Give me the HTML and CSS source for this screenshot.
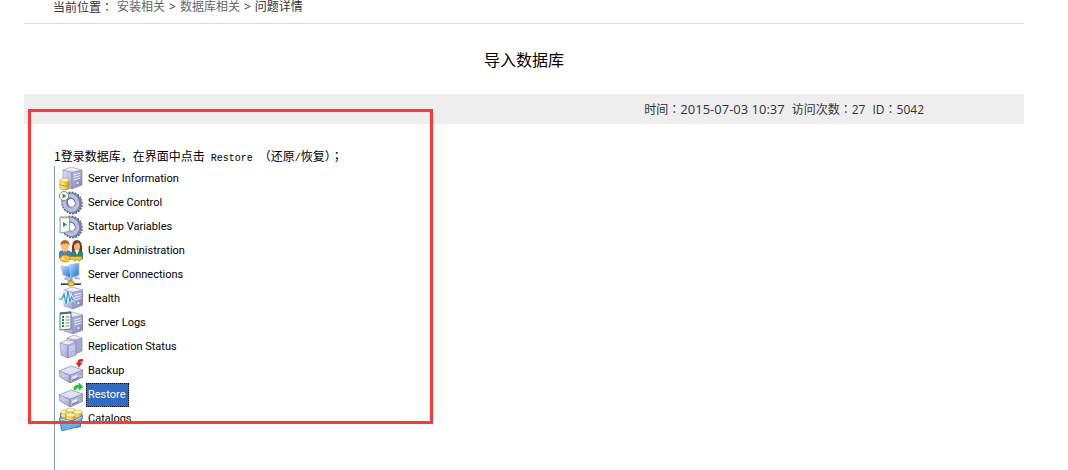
FILE: index.html
```html
<!DOCTYPE html>
<html lang="zh-CN">
<head>
    <meta charset="UTF-8">
    <meta name="viewport" content="width=device-width, initial-scale=1.0">
    <title>导入数据库</title>
    <link rel="stylesheet" href="styles.css">
</head>
<body>
    <!-- shared icon parts -->
    <svg class="icon-defs" aria-hidden="true">
        <defs>
            <linearGradient id="front" x1="0" y1="0" x2="1" y2="1">
                <stop offset="0" stop-color="#dcdef5"/>
                <stop offset="1" stop-color="#a2a5d2"/>
            </linearGradient>
            <linearGradient id="side" x1="0" y1="0" x2="1" y2="1">
                <stop offset="0" stop-color="#bcbfe2"/>
                <stop offset="1" stop-color="#7b7fb3"/>
            </linearGradient>
            <linearGradient id="gold" x1="0" y1="0" x2="1" y2="0">
                <stop offset="0" stop-color="#fff0a0"/>
                <stop offset="0.5" stop-color="#f8d558"/>
                <stop offset="1" stop-color="#cf9b2a"/>
            </linearGradient>
            <linearGradient id="screen" x1="0" y1="0" x2="1" y2="1">
                <stop offset="0" stop-color="#b5e3ff"/>
                <stop offset="1" stop-color="#1c69ce"/>
            </linearGradient>
            <g id="server">
                <path d="M4 3 13 5V22L4 19Z" fill="url(#front)" stroke="#8f92be" stroke-width=".6"/>
                <path d="M13 5 23 3V18L13 22Z" fill="url(#side)" stroke="#8184b3" stroke-width=".6"/>
                <path d="M4 3 12 0 23 3 13 5Z" fill="#eceefd" stroke="#9295c0" stroke-width=".6"/>
                <path d="M14.500 8 21.500 6M14.500 10.500 21.500 8.500M14.500 13 21.500 11" stroke="#edeefc" stroke-width="1"/>
                <circle cx="18.500" cy="16" r="1" fill="#eceefc"/>
            </g>
            <g id="gear">
                <g transform="rotate(-25 13 12)">
                    <ellipse cx="13" cy="12" rx="9.500" ry="10.500" fill="none" stroke="#575f87" stroke-width="2.200" stroke-dasharray="1.900 1.100"/>
                    <ellipse cx="13" cy="12" rx="7" ry="8" fill="none" stroke="#7780a8" stroke-width="5"/>
                    <ellipse cx="12" cy="11.500" rx="6.500" ry="7.500" fill="none" stroke="#b9bfdd" stroke-width="3.500"/>
                    <ellipse cx="12.500" cy="11.500" rx="3.800" ry="4.500" fill="#fff" stroke="#5c648e" stroke-width="1"/>
                </g>
            </g>
            <g id="drive">
                <path d="M0 12 11 16V24L1 18Z" fill="url(#front)" stroke="#7f82af" stroke-width=".7"/>
                <path d="M11 16 24 11V18L11 24Z" fill="#b4b7da" stroke="#73779f" stroke-width=".8"/>
                <path d="M0 12 12 7 24 11 11 16Z" fill="#dfe1f6" stroke="#8588b5" stroke-width=".7"/>
                <path d="M13 18 18 16V18L13 20Z" fill="#eef0ff"/>
                <path d="M13 21.500 20 18.500" stroke="#6b6f98" stroke-width=".9"/>
                <circle cx="21.500" cy="15" r=".9" fill="#83b985"/>
            </g>
            <g id="coins">
                <path d="M0 2V10A4.500 2 0 0 0 9 10V2Z" fill="url(#gold)" stroke="#b98b2e" stroke-width=".7"/>
                <path d="M0 6A4.500 2 0 0 0 9 6" fill="none" stroke="#b8861f" stroke-width=".8"/>
                <ellipse cx="4.500" cy="2" rx="4.500" ry="2" fill="#fff5ba" stroke="#c99f42" stroke-width=".6"/>
            </g>
        </defs>
    </svg>

    <div class="container">
        <nav class="breadcrumb">
            <span>当前位置<span class="colon" lang="zh-TW">：</span></span>
            <a href="#">安装相关</a>
            <span>&gt;</span>
            <a href="#">数据库相关</a>
            <span>&gt;</span>
            <span>问题详情</span>
        </nav>
        <h1>导入数据库</h1>
        <div class="info-bar">
            <span>时间<span class="colon" lang="zh-TW">：</span><span class="date">2015-07-03 10:37</span></span>
            <span>访问次数<span class="colon" lang="zh-TW">：</span>27</span>
            <span>ID<span class="colon" lang="zh-TW">：</span>5042</span>
        </div>

        <div class="content">
            <p class="step">1登录数据库，在界面中点击<span class="mono"> Restore </span>（还原<span class="mono">/</span>恢复）<span class="colon" lang="zh-TW">；</span></p>
            <ul class="tree">
                <li>
                    <a href="#">
                        <svg class="icon" viewBox="0 0 24 24"><use href="#server"/><use href="#coins" x="1" y="11"/></svg>
                        <span>Server Information</span>
                    </a>
                </li>
                <li>
                    <a href="#">
                        <svg class="icon" viewBox="0 0 24 24">
                            <use href="#gear"/>
                            <circle cx="5" cy="5" r="4.500" fill="#fff" stroke="#71827c" stroke-width=".9"/>
                            <path d="M3.500 2.500 7.500 5 3.500 7.500Z" fill="#18a532"/>
                        </svg>
                        <span>Service Control</span>
                    </a>
                </li>
                <li>
                    <a href="#">
                        <svg class="icon" viewBox="0 0 24 24">
                            <use href="#gear"/>
                            <path d="M1 2H10.500V16.500L1 18Z" fill="#f2fbf7" stroke="#7793a3" stroke-width=".9"/>
                            <path d="M1 2.500H10.500" stroke="#c8ad65" stroke-width="1.500"/>
                            <path d="M4 7 8 9.500 4 12Z" fill="#18a532"/>
                        </svg>
                        <span>Startup Variables</span>
                    </a>
                </li>
                <li>
                    <a href="#">
                        <svg class="icon" viewBox="0 0 24 24">
                            <path d="M0 19V14Q0 11 6 11T12 14V19Z" fill="#3c86bc"/>
                            <path d="M12 20V14Q12 11 18 11T24 14V20Z" fill="#238a78"/>
                            <path d="M4 11 6 16 8 11M16 11 18 16 20 11" fill="#fff"/>
                            <path d="M6 12V17" stroke="#d34124" stroke-width="1.500"/>
                            <ellipse cx="6" cy="7" rx="4" ry="5" fill="#f5c07c"/>
                            <path d="M1.500 7Q1 1 6 1T10.500 7L9 4.500 3 5Z" fill="#b86b17"/>
                            <path d="M13 13Q12 1 18 1T23 13L20 11H16Z" fill="#74391c"/>
                            <ellipse cx="18" cy="7.500" rx="3" ry="4" fill="#f2b980"/>
                            <path d="M14.500 6Q17 6 19 3L21.500 6 20 2H16Z" fill="#84441f"/>
                            <path d="M8 17.500H23V20.500H21V22H19V20.500H17V22H15V20.500H8Z" fill="#fac62e" stroke="#b37a13" stroke-width=".6"/>
                            <ellipse cx="6" cy="19.500" rx="5" ry="3.500" fill="#fbc52c" stroke="#b37a13" stroke-width=".7"/>
                            <circle cx="3.500" cy="19.500" r="1" fill="#fff"/>
                        </svg>
                        <span>User Administration</span>
                    </a>
                </li>
                <li>
                    <a href="#">
                        <svg class="icon" viewBox="0 0 24 24">
                            <path d="M7 14 14 16 11 18 5 16ZM16 12V16H21Z" fill="#bdc6d6" stroke="#8591a7" stroke-width=".5"/>
                            <path d="M12 14V20" stroke="#98a2b1" stroke-width="2"/>
                            <path d="M2 3 12 4V15L4 12Z" fill="url(#screen)" stroke="#a4c1dd" stroke-width=".9"/>
                            <path d="M10 2 20 0V12L12 15Z" fill="url(#screen)" stroke="#a4c1dd" stroke-width=".9"/>
                            <path d="M2 21H22" stroke="#3d4045" stroke-width="2"/>
                            <path d="M2 20.500H22" stroke="#a9adb4" stroke-width=".6"/>
                            <rect x="9" y="18" width="6" height="5" rx="1" fill="#f0c540" stroke="#987421" stroke-width=".7"/>
                        </svg>
                        <span>Server Connections</span>
                    </a>
                </li>
                <li>
                    <a href="#">
                        <svg class="icon" viewBox="0 0 24 24">
                            <use href="#server" x="1"/>
                            <path d="M0 12H3L5 7 7 17 9 4 11 15 12.500 10 14 13H16" fill="none" stroke="#e3f5ff" stroke-width="2.800"/>
                            <path d="M0 12H3L5 7 7 17 9 4 11 15 12.500 10 14 13H16" fill="none" stroke="#2f9ad8" stroke-width="1.200"/>
                        </svg>
                        <span>Health</span>
                    </a>
                </li>
                <li>
                    <a href="#">
                        <svg class="icon" viewBox="0 0 24 24">
                            <use href="#server" x="1" y="1"/>
                            <path d="M1 2 12 1V18L1 19Z" fill="#f5fbf7" stroke="#526b78" stroke-width=".9"/>
                            <path d="M1 2.500 12 1.500" stroke="#526b78" stroke-width="1.800"/>
                            <path d="M3 6H5M3 9H5M3 12H5M3 15H5" stroke="#18944e" stroke-width="1.800"/>
                            <path d="M6.500 6H10.500M6.500 9H10.500M6.500 12H10.500M6.500 15H10.500" stroke="#798a94" stroke-width="1"/>
                        </svg>
                        <span>Server Logs</span>
                    </a>
                </li>
                <li>
                    <a href="#">
                        <svg class="icon" viewBox="0 0 24 24">
                            <path d="M8 3 16 5V19L8 17Z" fill="url(#front)" stroke="#8588b6" stroke-width=".6"/>
                            <path d="M16 5 23 3V16L16 19Z" fill="#a5a9d2" stroke="#7175a8" stroke-width=".6"/>
                            <path d="M8 3 15 0 23 3 16 5Z" fill="#eceefd" stroke="#9295c0" stroke-width=".6"/>
                            <path d="M1 8 9 10V23L2 20Z" fill="url(#front)" stroke="#8588b6" stroke-width=".6"/>
                            <path d="M9 10 17 7V20L9 23Z" fill="#b9bce0" stroke="#7175a8" stroke-width=".6"/>
                            <path d="M1 8 8 5 17 7 9 10Z" fill="#eceefd" stroke="#9295c0" stroke-width=".6"/>
                            <path d="M10.500 13 15.500 11M10.500 15.500 15.500 13.500" stroke="#dfe1f5" stroke-width=".9"/>
                        </svg>
                        <span>Replication Status</span>
                    </a>
                </li>
                <li>
                    <a href="#">
                        <svg class="icon" viewBox="0 0 24 24">
                            <use href="#drive"/>
                            <path d="M24 0Q18 0 19 4H17L20 8 23 4H21Q21 2 24 2Z" fill="#ef1a20" stroke="#ef1a20" stroke-width=".6"/>
                        </svg>
                        <span>Backup</span>
                    </a>
                </li>
                <li>
                    <a href="#" class="selected">
                        <svg class="icon" viewBox="0 0 24 24">
                            <use href="#drive"/>
                            <path d="M15 7Q14 2 20 2V0L24 4 20 7V5Q17 4 17 7Z" fill="#20c52d" stroke="#20c52d" stroke-width=".5"/>
                        </svg>
                        <span>Restore</span>
                    </a>
                </li>
                <li>
                    <a href="#">
                        <svg class="icon" viewBox="0 0 24 24">
                            <path d="M1 6 8 4 22 8V20L2 23Z" fill="#2b79c9"/>
                            <use href="#coins" x="2" y="3"/>
                            <use href="#coins" x="7" y="1"/>
                            <use href="#coins" x="14" y="3"/>
                            <use href="#coins" x="7" y="6"/>
                            <path d="M0 11 14 14 24 8 21 19 3 24Z" fill="#62b2ed" stroke="#2c75bd" stroke-width=".7"/>
                            <path d="M1.500 12 14 15 22.500 10" fill="none" stroke="#c1e8ff" stroke-width="1"/>
                        </svg>
                        <span>Catalogs</span>
                    </a>
                </li>
            </ul>
            <div class="highlight"></div>
        </div>
    </div>
</body>
</html>
```
FILE: styles.css
```css
body {
    font-family: "Open Sans", "Noto Sans CJK SC", sans-serif;
    font-size: 12px;
    color: #333;
    background-color: #fff;
    margin: 0;
    overflow: hidden;
}
a {
    color: inherit;
    text-decoration: none;
}
.icon-defs {
    position: absolute;
    width: 0;
    height: 0;
}
.container {
    min-height: 100vh;
    margin: 0 44px 0 24px;
    display: flex;
    flex-direction: column;
}
.breadcrumb {
    display: flex;
    gap: 4px;
    height: 23px;
    line-height: 14px;
    padding-left: 29px;
    border-bottom: 1px solid #d9d9d9;
}
.breadcrumb a {
    color: #666;
}
/* centred full-width punctuation */
.colon {
    font-family: "Noto Sans CJK TC", sans-serif;
}
h1 {
    margin: 0;
    padding-top: 2px;
    font-size: 16px;
    font-weight: normal;
    line-height: 68px;
    color: #000;
    text-align: center;
}
.info-bar {
    display: flex;
    justify-content: flex-end;
    gap: 7px;
    height: 30px;
    padding-right: 100px;
    line-height: 30px;
    background-color: #eee;
}
.date {
    font-size: 13px;
}
.content {
    position: relative;
    flex: 1;
    display: flex;
    flex-direction: column;
    padding: 23px 30px 0;
    color: #000;
}
.step {
    margin: 0;
    height: 19px;
    font-family: "Noto Sans CJK SC", sans-serif;
    line-height: 18px;
}
.mono {
    font-family: "Liberation Mono", monospace;
    font-size: 10px;
    white-space: pre;
}
.tree {
    flex: 1;
    list-style: none;
    margin: 0;
    padding: 1px 0 0 4px;
    border-left: 1px solid #7f9db9;
    font-family: Roboto, Arial, sans-serif;
    font-size: 11px;
}
.tree li {
    display: flex;
}
.tree a {
    display: flex;
    align-items: center;
    height: 24px;
    gap: 3px;
}
.tree a span {
    line-height: 22px;
    padding: 0 2px 0 1px;
    border: 1px solid transparent;
}
.tree .selected span {
    color: #fff;
    background-color: #316ac5;
    border: 1px dotted #000;
}
.icon {
    width: 24px;
    height: 24px;
}
/* red frame drawn over the steps */
.highlight {
    position: absolute;
    top: -15px;
    left: 4px;
    width: 399px;
    height: 309px;
    border: 3px solid #ff3737;
    pointer-events: none;
}
```
